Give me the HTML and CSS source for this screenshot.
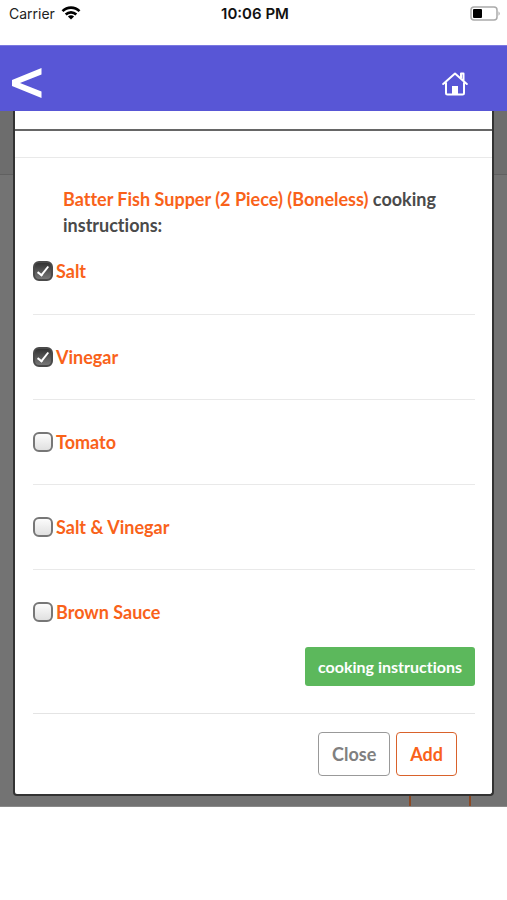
FILE: index.html
```html
<!DOCTYPE html>
<html lang="en">
<head>
<meta charset="utf-8">
<meta name="viewport" content="width=device-width, initial-scale=1">
<title>Cooking instructions</title>
<link rel="stylesheet" href="styles.css">
</head>
<body>
<div class="status">
  <span class="carrier">Carrier
    <svg width="20" height="16" viewBox="0 0 20 16" fill="none" stroke="#000" stroke-width="2.6" aria-hidden="true"><path d="M1.500 5.200C6.300 .4 13.700 .4 18.500 5.200M4.700 8.500C7.700 5.600 12.300 5.600 15.300 8.500"/><path d="M10 13.600L6.900 10.400C8.600 8.800 11.400 8.800 13.100 10.400Z" fill="#000" stroke="none"/></svg>
  </span>
  <span class="time">10:06 PM</span>
  <svg class="battery" width="31" height="15" viewBox="0 0 31 15" aria-hidden="true"><rect x="1" y="1" width="26" height="13" rx="3" fill="#fff" stroke="#aaa" stroke-width="1.500"/><rect x="3" y="3" width="9" height="9" rx="1" fill="#000"/><path d="M28.500 5.200Q31 7.500 28.500 9.800Z" fill="#aaa"/></svg>
</div>
<header class="nav">
  <a href="#" aria-label="Back"><svg width="30" height="32" viewBox="0 0 30 32" aria-hidden="true"><path d="M29.500 0V6.500L8 15L29.500 23.500V30L0 18V12Z" fill="#fff"/></svg></a>
  <a href="#" aria-label="Home"><svg width="26" height="24" viewBox="0 0 26 24" fill="none" stroke="#fff" stroke-width="2" stroke-linecap="round" stroke-linejoin="round" aria-hidden="true"><path d="M1.200 12L13 1.500L24.800 12M4 10.500V21Q4 22.500 5.500 22.500H20.500Q22 22.500 22 21V10.500M19 6V1.500H21.500V8.500"/><path d="M10 22.500V14H16V22.500Z" fill="#fff" stroke="none"/></svg></a>
</header>
<main class="backdrop">
  <form class="modal">
    <div class="modal-top"></div>
    <div class="modal-head"></div>
    <div class="modal-body">
      <h1><span>Batter Fish Supper (2 Piece) (Boneless)</span> cooking instructions:</h1>
      <ul>
        <li><label><input type="checkbox" checked>Salt</label></li>
        <li><label><input type="checkbox" checked>Vinegar</label></li>
        <li><label><input type="checkbox">Tomato</label></li>
        <li><label><input type="checkbox">Salt &amp; Vinegar</label></li>
        <li><label><input type="checkbox">Brown Sauce</label></li>
      </ul>
      <div class="save"><button type="button">cooking instructions</button></div>
      <footer>
        <button type="button" class="close">Close</button>
        <button type="button" class="add">Add</button>
      </footer>
    </div>
  </form>
  <div class="behind"></div>
</main>
</body>
</html>
```
FILE: styles.css
```css
* { box-sizing: border-box; }
body { margin: 0; background: #fff; font: 700 18px/26px Lato, sans-serif; font-variant-ligatures: none; color: #4a4a4a; }
.status { display: grid; grid-template-columns: 1fr auto 1fr; align-items: center; height: 45px; padding: 0 6px 18px 9px; font: 400 14px/20px Inter, sans-serif; color: #222; }
.carrier { display: flex; align-items: center; gap: 6px; }
.time { font-size: 15px; font-weight: 600; color: #111; }
.battery { justify-self: end; }
.nav { display: flex; justify-content: space-between; align-items: center; height: 66px; padding: 10px 39px 0 12px; background: #5856d6; border-top: 1px solid #7a78e0; }
.nav a { display: flex; }
.backdrop { background: linear-gradient(#6d6d6d 0 63px, #606060 63px 64px, #737373 64px); padding: 0 13px; border-bottom: 1px solid #8a8a8a; }
.modal { background: #fff; border: 2px solid #333; border-top: 0; border-radius: 0 0 4px 4px; }
.modal-top { height: 20px; border-bottom: 2px solid #666; }
.modal-head { height: 27px; border-bottom: 1px solid #e9e9e9; }
.modal-body { padding: 28px 17px 18px 18px; }
h1 { margin: 0 16px 20px 30px; font-size: 18px; line-height: 26px; }
h1 span, li { color: #f9621a; }
ul { list-style: none; margin: 0; padding: 0; }
li { height: 85px; }
li + li { border-top: 1px solid #e9e9e9; padding-top: 29px; }
li:first-child { height: 56px; }
li:last-child { height: 58px; }
label { display: flex; align-items: center; gap: 3px; }
input { appearance: none; display: grid; place-items: center; width: 20px; height: 20px; margin: 0; border: 2px solid #777; border-radius: 6px; background: linear-gradient(#fff, #ddd) border-box; }
input:checked { border-color: #4a4a4a; background: linear-gradient(#333, #777); }
input:checked::after { content: ""; width: 4px; height: 10px; margin-bottom: 2px; border: solid #fff; border-width: 0 2px 2px 0; transform: rotate(38deg); }
.save { display: flex; justify-content: flex-end; padding: 20px 0 27px; border-bottom: 1px solid #e4e4e4; }
button { font: inherit; font-variant-ligatures: none; border-radius: 4px; background: #fff; }
.save button { height: 39px; padding: 0 13px; border: 0; border-radius: 3px; background: #5cb85c; color: #fff; font-size: 16px; }
footer { display: flex; justify-content: flex-end; gap: 6px; padding: 18px 18px 0 0; }
footer button { height: 44px; padding: 0 13px; }
.close { border: 1px solid #999; color: #808080; }
.add { border: 1px solid #d9622b; color: #f9621a; }
.behind { width: 62px; height: 10px; margin: 0 23px 0 auto; border: solid #8b4a26; border-width: 0 2px; }
```
